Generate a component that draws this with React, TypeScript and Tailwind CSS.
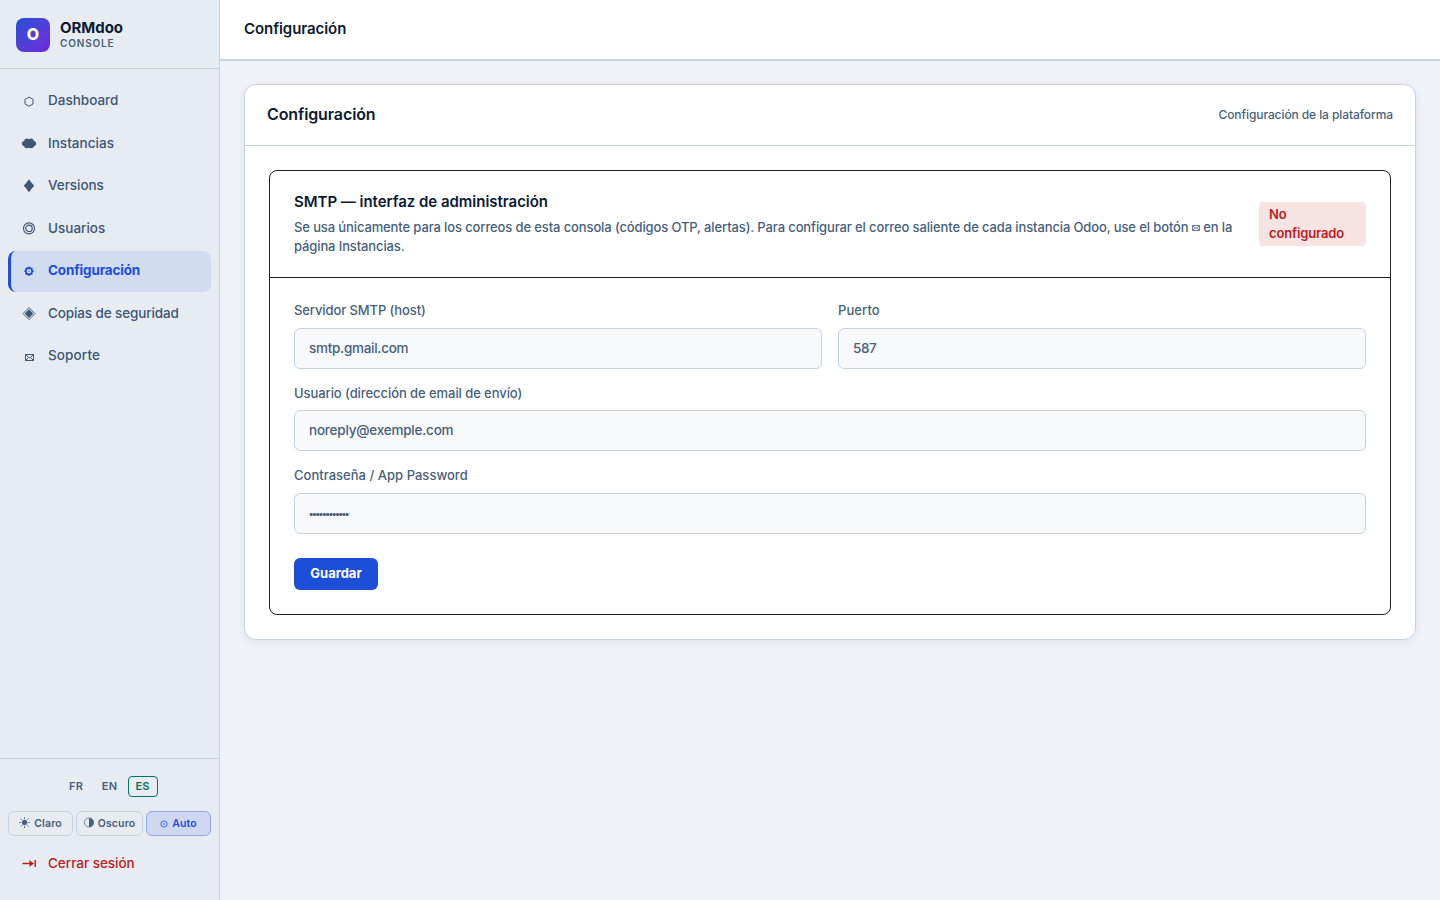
import { ReactNode } from 'react';
import clsx from 'clsx';

const HexagonIcon = () => (
  <svg width="18" height="18" viewBox="0 0 18 18" fill="none" stroke="currentColor" strokeWidth="1">
    <path d="M9 5.1 13 7.3v4.7L9 14.2 5 12V7.3Z" />
  </svg>
);

const CloudIcon = () => (
  <svg width="18" height="18" viewBox="0 0 18 18" fill="currentColor">
    <circle cx="4.5" cy="8.5" r="2.6" />
    <circle cx="6.9" cy="6.2" r="2.7" />
    <circle cx="11.1" cy="6.2" r="2.7" />
    <circle cx="13.5" cy="8.5" r="2.6" />
    <circle cx="6.9" cy="10.3" r="2.9" />
    <circle cx="11.1" cy="10.3" r="2.9" />
    <path d="M6 4.4h6v8.2H6Z" />
  </svg>
);

const DiamondIcon = () => (
  <svg width="18" height="18" viewBox="0 0 18 18" fill="currentColor">
    <path d="M9 2.2C10.7 4.5 12.5 6.9 14.2 8.7 12.5 10.5 10.7 12.9 9 15.2 7.3 12.9 5.5 10.5 3.8 8.7 5.5 6.9 7.3 4.5 9 2.2Z" />
  </svg>
);

const BullseyeIcon = () => (
  <svg width="18" height="18" viewBox="0 0 18 18" fill="none" stroke="currentColor">
    <circle cx="9" cy="8.4" r="5.5" strokeWidth="1.1" />
    <circle cx="9" cy="8.4" r="3.2" strokeWidth="1.2" />
  </svg>
);

const GearIcon = () => (
  <svg width="18" height="18" viewBox="0 0 18 18" fill="none" stroke="currentColor">
    <circle cx="9" cy="9.2" r="3.1" strokeWidth="1.6" />
    <path
      d="M9 4.5v1.7M9 12.2v1.7M4.3 9.2H6M12 9.2h1.7M5.7 5.9l1.2 1.2M11.1 11.3l1.2 1.2M5.7 12.5l1.2-1.2M11.1 7.1l1.2-1.2"
      strokeWidth="1.5"
    />
    <circle cx="9" cy="9.2" r="0.6" fill="currentColor" stroke="none" />
  </svg>
);

const NestedDiamondIcon = () => (
  <svg width="18" height="18" viewBox="0 0 18 18">
    <path d="M9 2.6 15 8.6 9 14.6 3 8.6Z" fill="none" stroke="currentColor" strokeWidth="0.9" />
    <path d="M9 4.3 13.3 8.6 9 12.9 4.7 8.6Z" fill="currentColor" />
  </svg>
);

const EnvelopeIcon = ({ className }: { className?: string }) => (
  <svg className={className} width="9" height="7" viewBox="0 0 9 7" fill="none" stroke="currentColor" strokeWidth="1">
    <path d="M.5.5h8v6h-8ZM.5.5l3 2.8q1 .9 2 0l3-2.8M.5 6.5l3-3M8.5 6.5l-3-3" />
  </svg>
);

const SunIcon = () => (
  <svg className="-mt-0.5" width="11" height="11" viewBox="0 0 11 11" stroke="currentColor" strokeWidth="0.8">
    <circle cx="5.5" cy="5.5" r="2.4" fill="currentColor" />
    <path d="M5.5 0v2M5.5 9v2M0 5.5h2M9 5.5h2M1.5 1.5l1.3 1.3M8.2 8.2l1.3 1.3M1.5 9.5l1.3-1.3M8.2 2.8l1.3-1.3" />
  </svg>
);

const HalfIcon = () => (
  <svg className="-mt-0.5" width="10" height="11" viewBox="0 0 10 11">
    <circle cx="5" cy="5.5" r="4.6" fill="none" stroke="currentColor" strokeWidth="0.7" />
    <path d="M5 .9a4.6 4.6 0 0 1 0 9.2Z" fill="currentColor" />
  </svg>
);

const AutoIcon = () => (
  <svg width="8" height="8" viewBox="0 0 8 8" fill="none" stroke="currentColor">
    <circle cx="4" cy="4" r="3.1" strokeWidth="0.8" />
    <circle cx="4" cy="4" r="0.8" fill="currentColor" stroke="none" />
  </svg>
);

const LogoutIcon = () => (
  <svg width="18" height="18" viewBox="0 0 18 18">
    <path d="M2.5 8.5H10M15.2 5v7" fill="none" stroke="currentColor" strokeWidth="1.4" />
    <path d="M9.2 4.9 14 8.5 9.2 12.1Q10.3 8.5 9.2 4.9Z" fill="currentColor" />
  </svg>
);

type NavItem = { label: string; icon: ReactNode; text: string; active?: boolean };

const navItems: NavItem[] = [
  { label: 'Dashboard', icon: <HexagonIcon />, text: 'tracking-normal' },
  { label: 'Instancias', icon: <CloudIcon />, text: 'tracking-[0.03px]' },
  { label: 'Versions', icon: <DiamondIcon />, text: 'tracking-[-0.05px]' },
  { label: 'Usuarios', icon: <BullseyeIcon />, text: 'tracking-normal' },
  { label: 'Configuración', icon: <GearIcon />, text: 'tracking-[-0.16px]', active: true },
  { label: 'Copias de seguridad', icon: <NestedDiamondIcon />, text: 'tracking-[-0.12px]' },
  { label: 'Soporte', icon: <EnvelopeIcon className="mt-[3px]" />, text: 'tracking-[0.12px]' },
];

function Sidebar() {
  return (
    <aside className="flex w-[220px] shrink-0 flex-col border-r border-[#c5d3e1] bg-[#e7ecf3]">
      <div className="flex h-[69px] shrink-0 items-center gap-2.5 border-b border-[#c5d3e1] px-4 pt-px">
        <div className="flex size-[34px] items-center justify-center rounded-lg bg-linear-135 from-[#1d4ed8] to-[#6d28d9] pb-0.5 text-base font-extrabold text-white">
          O
        </div>
        <div>
          <div className="text-[15px] leading-[18px] font-bold tracking-[-0.05px] text-[#0c1b30]">ORMdoo</div>
          <div className="text-[10px] leading-[13px] font-semibold tracking-[0.85px] text-[#475f7a]">CONSOLE</div>
        </div>
      </div>

      <nav className="flex flex-1 flex-col gap-0.5 px-2 py-3">
        {navItems.map((item) => (
          <a
            key={item.label}
            className={clsx(
              'flex h-[40.5px] items-center gap-2.5 rounded-lg border-l-[3px] pl-[9px] text-[13.5px] whitespace-nowrap',
              item.active
                ? 'border-[#1d4ed8] bg-[#d2dcf0] font-bold text-[#1d4ed8]'
                : 'border-transparent font-medium text-[#3d5673]',
            )}
          >
            <span className="flex w-[18px] justify-center">{item.icon}</span>
            <span className={clsx('-mt-0.5', item.text)}>{item.label}</span>
          </a>
        ))}
      </nav>

      <div className="h-[142px] shrink-0 border-t border-[#c5d3e1] px-2 pt-[17px]">
        <div className="flex justify-center gap-1 text-[11px] font-semibold text-[#475f7a]">
          <span className="flex h-[21px] w-[29px] items-center justify-center tracking-[0.2px]">FR</span>
          <span className="flex h-[21px] w-[30px] items-center justify-center tracking-[0.2px]">EN</span>
          <span className="-ml-px flex h-[21px] w-[30px] items-center justify-center rounded border border-[#047857] tracking-[0.2px] text-[#047857]">
            ES
          </span>
        </div>
        <div className="mt-3.5 flex gap-[3px] text-[10.5px] font-semibold text-[#475f7a]">
          <button className="flex h-[25px] w-[65px] items-center justify-center gap-1 rounded-md border border-[#c5d3e1]">
            <SunIcon />
            <span className="tracking-[0.12px]">Claro</span>
          </button>
          <button className="flex h-[25px] w-[67px] items-center justify-center gap-1 rounded-md border border-[#c5d3e1]">
            <HalfIcon />
            <span className="tracking-[0.12px]">Oscuro</span>
          </button>
          <button className="flex h-[25px] w-[65px] items-center justify-center gap-1 rounded-md border border-[#8fa8eb] bg-[#cfd8f0] text-[#1d4ed8]">
            <AutoIcon />
            <span className="tracking-[0.05px]">Auto</span>
          </button>
        </div>
        <a className="mt-[7px] flex h-[41px] items-center gap-2.5 pl-3 text-[13.5px] font-medium text-[#b91c1c]">
          <LogoutIcon />
          <span className="tracking-[-0.03px]">Cerrar sesión</span>
        </a>
      </div>
    </aside>
  );
}

type FieldProps = { label: string; placeholder: string; type?: string; labelClass: string; inputClass: string };

function Field({ label, placeholder, type = 'text', labelClass, inputClass }: FieldProps) {
  return (
    <label className="block flex-1">
      <span className={clsx('block h-[26px] text-[13px] font-[450] text-[#475f7a]', labelClass)}>{label}</span>
      <input
        type={type}
        placeholder={placeholder}
        className={clsx(
          'block h-[41px] w-full rounded-md border border-[#c5d3e1] bg-[#f8f9fb] pb-0.5 font-[450] placeholder:text-[#475f7a] placeholder:opacity-100',
          inputClass,
        )}
      />
    </label>
  );
}

export default function App() {
  return (
    <div className="flex h-[900px] w-[1440px] overflow-hidden bg-[#eff3f8] font-['Inter','Liberation_Sans',sans-serif] text-[#0c1b30]">
      <Sidebar />

      <main className="flex min-w-0 flex-1 flex-col">
        <header className="flex h-[61px] shrink-0 items-center border-b-2 border-[#c5d3e1] bg-white px-6">
          <h1 className="text-[15px] font-semibold tracking-[-0.07px]">Configuración</h1>
        </header>

        <div className="px-6 pt-[23px]">
          <section className="h-[556px] rounded-xl border border-[#c5d3e1] bg-white shadow-[0_2px_8px_rgba(12,27,48,0.07)]">
            <div className="flex h-[61px] items-center justify-between border-b border-[#c5d3e1] px-[22px]">
              <h2 className="-mt-0.5 text-base font-semibold tracking-[-0.12px]">Configuración</h2>
              <span className="text-xs font-[450] tracking-[-0.09px] text-[#475f7a]">
                Configuración de la plataforma
              </span>
            </div>

            {/* SMTP settings */}
            <div className="mx-6 mt-6 h-[445px] rounded-lg border border-[#202124]">
              <div className="flex h-[107px] items-center border-b border-[#202124] px-6">
                <div className="-mt-px w-[965px] shrink-0">
                  <h3 className="text-[15px] leading-[22px] font-semibold tracking-[-0.03px]">
                    SMTP — interfaz de administración
                  </h3>
                  <p className="mt-[5px] text-[13px] leading-[19.5px] font-[450] tracking-[-0.12px] text-[#475f7a]">
                    Se usa únicamente para los correos de esta consola (códigos OTP, alertas). Para configurar el correo
                    saliente de cada instancia Odoo, use el botón <EnvelopeIcon className="inline h-[6px] w-2" /> en la
                    <br />
                    página Instancias.
                  </p>
                </div>
                <span className="h-11 flex-1 rounded bg-[#f6e4e4] px-2.5 py-[3px] text-[13px] leading-[19px] font-semibold tracking-[-0.15px] text-[#b91c1c]">
                  No
                  <br />
                  configurado
                </span>
              </div>

              <form className="px-6 pt-6">
                <div className="flex gap-4">
                  <Field
                    label="Servidor SMTP (host)"
                    placeholder="smtp.gmail.com"
                    labelClass="leading-[17px] tracking-[-0.1px]"
                    inputClass="px-3.5 text-[13.5px] tracking-[-0.28px]"
                  />
                  <Field
                    label="Puerto"
                    placeholder="587"
                    labelClass="leading-[17px] tracking-[0.1px]"
                    inputClass="px-3.5 text-[13.5px] tracking-[-0.4px]"
                  />
                </div>
                <div className="mt-[15px]">
                  <Field
                    label="Usuario (dirección de email de envío)"
                    placeholder="noreply@exemple.com"
                    labelClass="leading-[19px] tracking-[-0.07px]"
                    inputClass="px-3.5 text-[13.5px] tracking-[-0.22px]"
                  />
                </div>
                <div className="mt-4">
                  <Field
                    label="Contraseña / App Password"
                    placeholder="••••••••••••"
                    type="password"
                    labelClass="leading-[17px] tracking-[0.02px]"
                    inputClass="px-[13.5px] text-[10px] tracking-[-2.05px]"
                  />
                </div>
                <button
                  type="button"
                  className="mt-6 flex h-8 w-[84px] items-center justify-center rounded-md bg-[#1d4ed8] text-[13px] font-bold text-white"
                >
                  Guardar
                </button>
              </form>
            </div>
          </section>
        </div>
      </main>
    </div>
  );
}
